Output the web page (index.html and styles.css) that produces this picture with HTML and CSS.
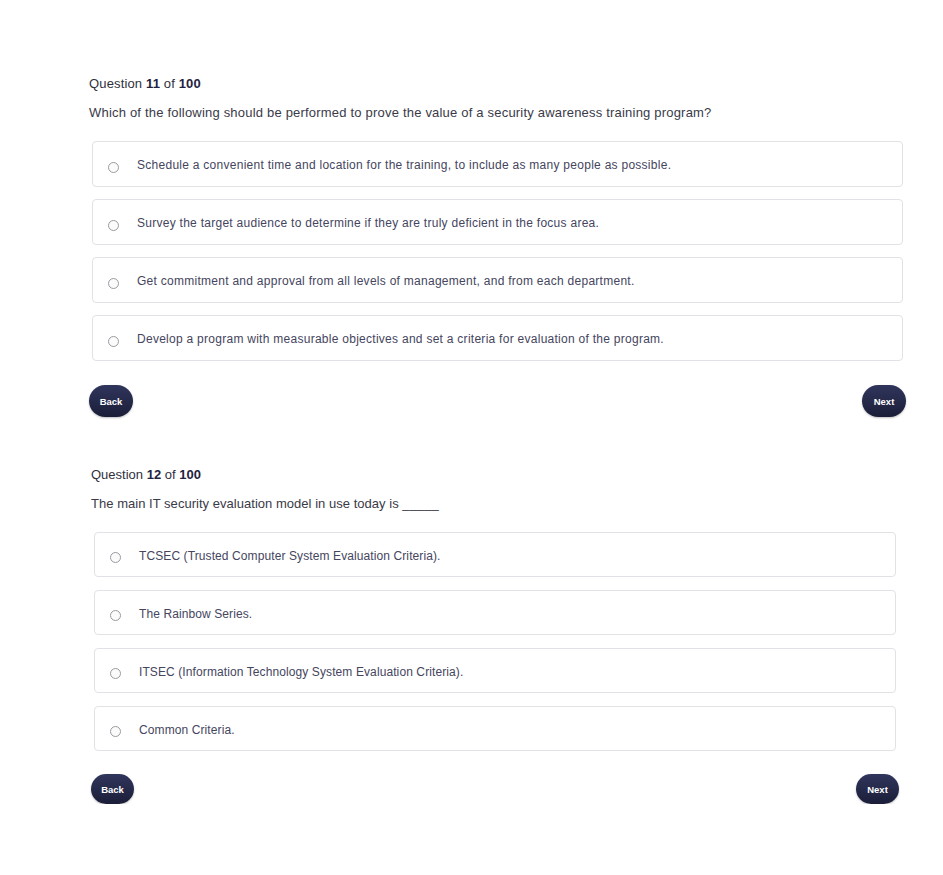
FILE: index.html
```html
<!DOCTYPE html>
<html lang="en">
<head>
<meta charset="utf-8">
<title>Quiz</title>
<link rel="stylesheet" href="styles.css">
</head>
<body>
<main class="page">
  <section class="quiz quiz-a">
    <p class="count">Question <b>11</b> of <b>100</b></p>
    <p class="question">Which of the following should be performed to prove the value of a security awareness training program?</p>
    <ul class="options">
      <li class="option"><span class="radio"></span><span class="label">Schedule a convenient time and location for the training, to include as many people as possible.</span></li>
      <li class="option"><span class="radio"></span><span class="label">Survey the target audience to determine if they are truly deficient in the focus area.</span></li>
      <li class="option"><span class="radio"></span><span class="label">Get commitment and approval from all levels of management, and from each department.</span></li>
      <li class="option"><span class="radio"></span><span class="label">Develop a program with measurable objectives and set a criteria for evaluation of the program.</span></li>
    </ul>
    <div class="nav">
      <button class="btn">Back</button>
      <button class="btn">Next</button>
    </div>
  </section>
  <section class="quiz quiz-b">
    <p class="count">Question <b>12</b> of <b>100</b></p>
    <p class="question">The main IT security evaluation model in use today is _____</p>
    <ul class="options">
      <li class="option"><span class="radio"></span><span class="label">TCSEC (Trusted Computer System Evaluation Criteria).</span></li>
      <li class="option"><span class="radio"></span><span class="label">The Rainbow Series.</span></li>
      <li class="option"><span class="radio"></span><span class="label">ITSEC (Information Technology System Evaluation Criteria).</span></li>
      <li class="option"><span class="radio"></span><span class="label">Common Criteria.</span></li>
    </ul>
    <div class="nav">
      <button class="btn">Back</button>
      <button class="btn">Next</button>
    </div>
  </section>
</main>
</body>
</html>
```
FILE: styles.css
```css
* { box-sizing: border-box; }
html, body { margin: 0; padding: 0; background: #ffffff; }
body {
  font-family: "Liberation Sans", Arial, sans-serif;
  color: #2f2f3a;
}
.page {
  padding-top: 76px;
  display: flex;
  flex-direction: column;
}
.quiz { display: flex; flex-direction: column; }
.quiz-a { margin-left: 89px; width: 817px; }
.quiz-b { margin-left: 91px; width: 808px; margin-top: 50px; }

.count {
  margin: 0;
  font-size: 13px;
  line-height: 16px;
  letter-spacing: 0.15px;
  color: #30303c;
}
.quiz-b .count { letter-spacing: 0; }
.count b { color: #1f2240; font-weight: 700; }
.question {
  margin: 13px 0 0;
  font-size: 13px;
  line-height: 16px;
  letter-spacing: 0.2px;
  color: #3a3a48;
}
.quiz-b .question { letter-spacing: 0.03px; }
.options {
  list-style: none;
  margin: 20px 3px 0;
  padding: 0;
  display: flex;
  flex-direction: column;
  gap: 12px;
}
.quiz-b .options { gap: 13px; }
.option {
  height: 46px;
  border: 1px solid #e2e2e6;
  border-radius: 4px;
  display: flex;
  align-items: center;
  padding: 2px 0 0 15px;
  background: #fff;
}
.quiz-b .option { height: 45px; }
.radio {
  width: 11px;
  height: 11px;
  border: 1px solid #9a9aa2;
  border-radius: 50%;
  background: #fbfbfc;
  flex: none;
  margin-top: 4px;
}
.label {
  margin-left: 18px;
  font-size: 12px;
  line-height: 14px;
  letter-spacing: 0.27px;
  color: #45455e;
}
.quiz-b .label { letter-spacing: 0.1px; }
.nav {
  margin-top: 24px;
  display: flex;
  justify-content: space-between;
}
.quiz-b .nav { margin-top: 23px; }
.btn {
  width: 44px;
  height: 32px;
  border: none;
  border-radius: 16px;
  background: linear-gradient(#30355c, #1b1e38);
  color: #fff;
  font-family: "Liberation Sans", Arial, sans-serif;
  font-weight: 700;
  font-size: 9.5px;
  padding: 0;
  box-shadow: 0 1px 2px rgba(0,0,0,0.25);
}
.quiz-b .btn { width: 43px; height: 30px; border-radius: 15px; }
```
